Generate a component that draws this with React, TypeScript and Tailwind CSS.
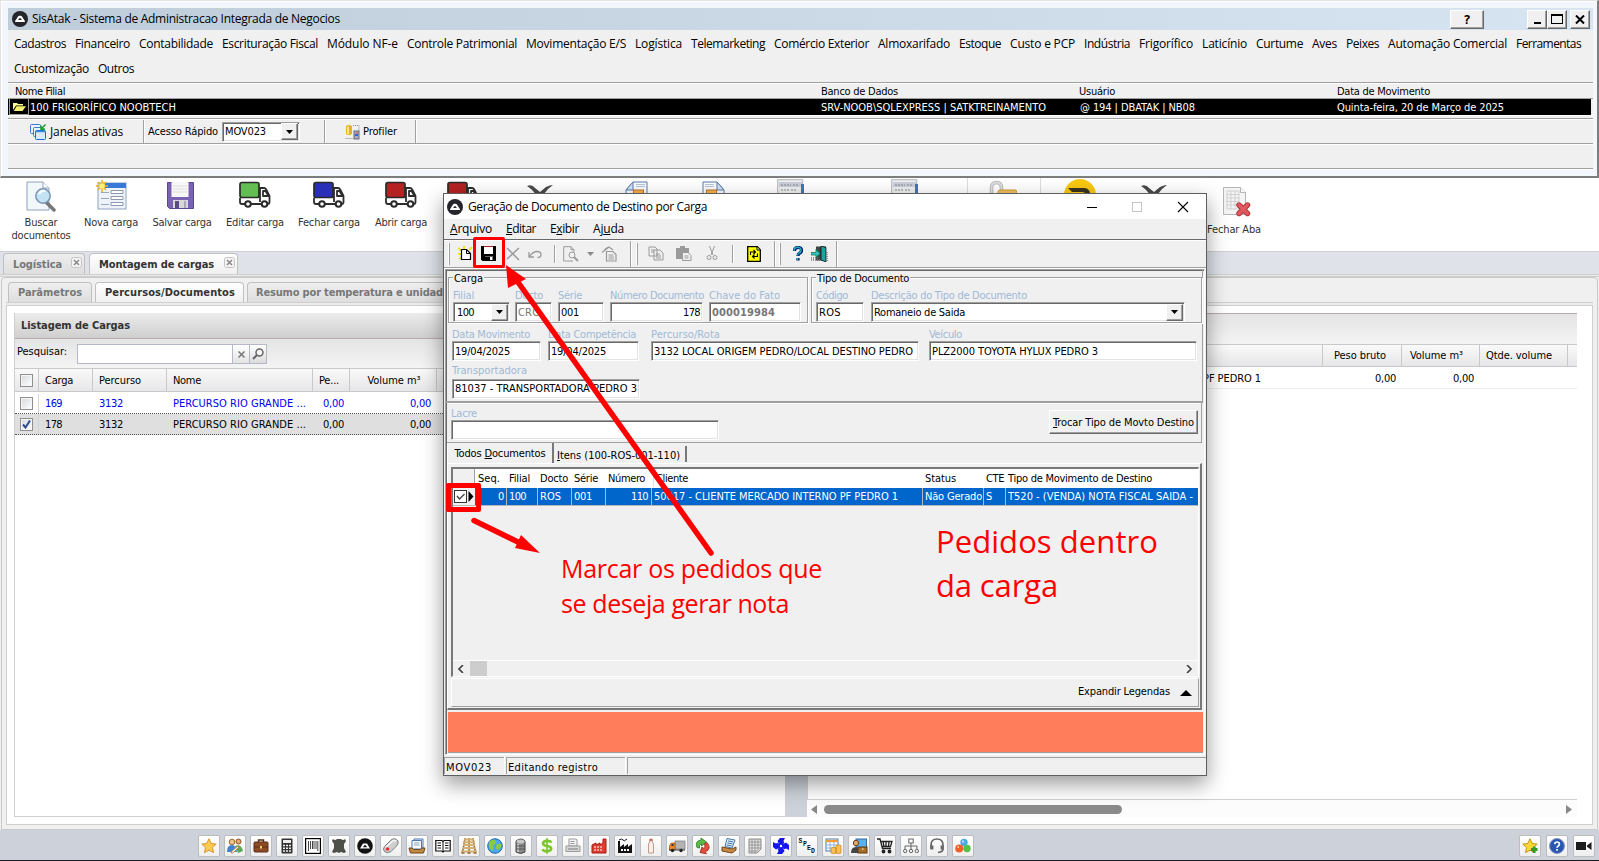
import React, { useLayoutEffect, useRef, useState } from "react";

const TAHOMA = "[--dy:1px] font-['DejaVu_Sans_Condensed','DejaVu_Sans',sans-serif] [font-stretch:condensed] text-[11px]";
const SEGOE = "[--dy:0px] font-['Open_Sans','Noto_Sans',sans-serif] [font-stretch:normal] text-[12px]";
const NOTE = "font-['Open_Sans','Noto_Sans',sans-serif] [font-stretch:88%] text-[#ff0000]";
const RAISED =
  "border border-t-white border-l-white border-r-[#696969] border-b-[#696969] bg-[#f0f0f0] shadow-[inset_-1px_-1px_0_#a0a0a0]";
const SUNKEN =
  "border border-t-[#a0a0a0] border-l-[#a0a0a0] border-r-white border-b-white bg-white shadow-[inset_1px_1px_0_#696969,inset_-1px_-1px_0_#e3e3e3]";

/* Text that spreads its letters to fill the given width. */
function Fit({ w, className = "", children }: { w: number; className?: string; children: React.ReactNode }) {
  const ref = useRef<HTMLSpanElement>(null);
  const [spacing, setSpacing] = useState(0);
  useLayoutEffect(() => {
    const el = ref.current;
    if (!el) return;
    const n = (el.textContent || "").length || 1;
    setSpacing((w - el.getBoundingClientRect().width) / n);
  }, [w]);
  return (
    <span ref={ref} className={`inline-block shrink-0 translate-y-(--dy) whitespace-pre ${className}`} style={{ letterSpacing: spacing }}>
      {children}
    </span>
  );
}

const Logo = ({ className = "size-4" }: { className?: string }) => (
  <svg viewBox="0 0 16 16" className={className}>
    <circle cx="8" cy="8" r="8" fill="#25252b" />
    <path d="M3 10.200 6 5.600Q6.500 4.800 7.300 4.800h1.400q.8 0 1.300.8l3 4.600q.3.8-.6.8H3.600Q2.700 11 3 10.200Z" fill="#fff" />
    <path d="M6.200 9 7.300 7.300h1.400L9.800 9Z" fill="#25252b" />
  </svg>
);

const Down = () => (
  <svg viewBox="0 0 7 4" className="h-[4px] w-[7px]">
    <path d="M0 0h7L3.500 4Z" fill="#000" />
  </svg>
);

/* ---------- application window ---------- */

const MENU: [string, number][] = [
  ["Cadastros", 52], ["Financeiro", 55], ["Contabilidade", 74], ["Escrituração Fiscal", 96], ["Módulo NF-e", 71],
  ["Controle Patrimonial", 110], ["Movimentação E/S", 100], ["Logística", 47], ["Telemarketing", 74],
  ["Comércio Exterior", 95], ["Almoxarifado", 72], ["Estoque", 42], ["Custo e PCP", 65], ["Indústria", 46],
  ["Frigorífico", 54], ["Laticínio", 45], ["Curtume", 47], ["Aves", 25], ["Peixes", 33],
  ["Automação Comercial", 119], ["Ferramentas", 65],
];

function AppWindow() {
  return (
    <header className="h-[178px] shrink-0 border-t border-l border-[#e3e3e3] border-r-2 border-b-2 border-r-[#7d7d7d] border-b-[#7d7d7d] bg-[#f3f6fc] pt-[7px] pr-[4px] pl-[7px] shadow-[inset_1px_1px_0_#fff]">
      <div className="flex h-[162px] flex-col bg-[#f0f0f0]">
        <div className="flex h-[22px] items-center bg-gradient-to-r from-[#bfcddb] to-[#d7e4f2] pl-1">
          <Logo />
          <Fit w={308} className={`${SEGOE} ml-[4px] leading-[22px] text-black`}>SisAtak - Sistema de Administracao Integrada de Negocios</Fit>
          <div className={`${RAISED} mr-[43px] ml-auto flex h-[19px] w-[34px] items-center justify-center`}>
            <b className="font-['DejaVu_Sans_Mono'] text-[13px] leading-none">?</b>
          </div>
          <div className={`${RAISED} flex h-[19px] w-[20px] items-end justify-center pb-[4px]`}>
            <i className="h-[2px] w-[7px] bg-black" />
          </div>
          <div className={`${RAISED} flex h-[19px] w-[20px] items-center justify-center`}>
            <i className="h-[10px] w-[12px] border border-t-2 border-black" />
          </div>
          <div className={`${RAISED} mr-[3px] ml-[3px] flex h-[19px] w-[20px] items-center justify-center`}>
            <svg viewBox="0 0 10 9" className="h-[9px] w-[10px]"><path d="m1 .5 8 8M9 .5l-8 8" stroke="#000" strokeWidth="2" /></svg>
          </div>
        </div>
        <nav className={`${SEGOE} h-[52px] pt-[1px] pl-[6px]`}>
          <div className="flex h-[25px] items-center gap-[9px]">
            {MENU.map(([t, w]) => <Fit key={t} w={w}>{t}</Fit>)}
          </div>
          <div className="flex h-[25px] items-center gap-[9px]">
            <Fit w={75}>Customização</Fit>
            <Fit w={36}>Outros</Fit>
          </div>
        </nav>
        <div className={`${TAHOMA} grid h-[17px] shrink-0 grid-cols-[813px_258px_258px_1fr] items-center border-t border-b border-t-[#a0a0a0] border-b-[#a0a0a0] shadow-[inset_0_1px_0_#fff]`}>
          <Fit w={50} className="ml-[7px] justify-self-start">Nome Filial</Fit>
          <Fit w={77} className="justify-self-start">Banco de Dados</Fit>
          <Fit w={36} className="justify-self-start">Usuário</Fit>
          <Fit w={93} className="justify-self-start">Data de Movimento</Fit>
        </div>
        <div className={`${TAHOMA} [--dy:0px] mr-[2px] grid h-[16px] shrink-0 grid-cols-[813px_258px_258px_1fr] items-center bg-black text-white`}>
          <div className="flex h-[16px] items-center">
            <div className="ml-[1px] flex h-[16px] w-[20px] items-center justify-center border border-t-0 border-[#a09a90]">
              <svg viewBox="0 0 13 9" className="h-[9px] w-[13px]">
                <path d="M0 1h4l1 1h5v1.500H3L0 8Z" fill="#ffff90" /><path d="M3.500 4.200H13L9.500 9H.8Z" fill="#f4f070" />
              </svg>
            </div>
            <Fit w={146} className="ml-[1px] leading-[16px]">100 FRIGORÍFICO NOOBTECH</Fit>
          </div>
          <Fit w={225} className="justify-self-start">SRV-NOOB\SQLEXPRESS | SATKTREINAMENTO</Fit>
          <Fit w={115} className="ml-px justify-self-start">@ 194 | DBATAK | NB08</Fit>
          <Fit w={167} className="justify-self-start">Quinta-feira, 20 de Março de 2025</Fit>
        </div>
        <div className="h-[3px] shrink-0 border-t border-white" />
        <div className="flex h-[25px] shrink-0 items-center border-t border-[#a0a0a0] pt-px shadow-[inset_0_1px_0_#fff]">
          <svg viewBox="0 0 17 17" className="ml-[22px] size-[17px]">
            <rect x=".5" y="1.500" width="10" height="9" rx="1" fill="#eaf3fc" stroke="#3b7bd0" />
            <rect x="3.500" y="4.500" width="10" height="9" rx="1" fill="#eaf3fc" stroke="#3b7bd0" />
            <rect x="5.500" y="7.500" width="10" height="9" rx="1" fill="#d9eafb" stroke="#1f6bc8" />
            <path d="M6 8.500h9" stroke="#3b8be0" strokeWidth="1.500" />
            <path d="M15.500 1.500 11 6M11 2.500v3.700h4" stroke="#1f9a30" strokeWidth="1.500" fill="none" />
          </svg>
          <Fit w={73} className={`${SEGOE} ml-[3px]`}><u>J</u>anelas ativas</Fit>
          <i className="ml-[20px] h-[23px] w-[2px] border-r border-l border-l-[#a0a0a0] border-r-white" />
          <Fit w={70} className={`${TAHOMA} ml-[3px]`}>Acesso Rápido</Fit>
          <div className={`${SUNKEN} ml-[4px] flex h-[20px] w-[78px] items-center justify-between pr-px pl-[2px]`}>
            <Fit w={41} className={`${TAHOMA} [--dy:0px]`}>MOV023</Fit>
            <div className={`${RAISED} flex h-[17px] w-[17px] items-center justify-center`}><Down /></div>
          </div>
          <i className="ml-[24px] h-[23px] w-[2px] border-r border-l border-l-[#a0a0a0] border-r-white" />
          <svg viewBox="0 0 15 16" className="ml-[19px] h-[16px] w-[15px]">
            <path d="M1 2q3-2 6 0v8q-3 2-6 0Z" fill="#eab020" /><path d="M2 2.500h2v7.500H2Z" fill="#ffe28a" />
            <path d="M8 1.500h6v6M.5 14.500h8" stroke="#888" strokeDasharray="1 1" fill="none" />
            <rect x="9" y="7" width="5" height="8" fill="#aab" stroke="#667" /><path d="M10 11h3" stroke="#36c" strokeWidth="2" /><path d="M11 9h2" stroke="#d44" />
          </svg>
          <Fit w={34} className={`${TAHOMA} ml-[3px]`}>Profiler</Fit>
          <i className="ml-[18px] h-[23px] w-[2px] border-r border-l border-l-[#a0a0a0] border-r-white" />
        </div>
        <div className="mb-[1px] flex-1 border-t border-b border-[#a0a0a0] shadow-[inset_0_1px_0_#fff,0_1px_0_#fff]" />
      </div>
    </header>
  );
}

/* ---------- web toolbar ---------- */

const Truck = ({ c }: { c: string }) => (
  <svg viewBox="0 0 32 27" className="h-[27px] w-[32px]" strokeLinejoin="round">
    <path d="M1 17v4q0 2 2 2h4M12 23h11M21 7h4q1.500 0 2.200 1.500L30.500 15v6q0 2-2 2M21 6v15M24 10v5h5.500L26.500 10Z" fill="none" stroke="#2e2e2e" strokeWidth="1.800" />
    <rect x="1" y="1.500" width="19" height="15" rx="2" fill={c} stroke="#2a2a2a" strokeWidth="1.700" />
    <circle cx="9" cy="23" r="2.800" fill="#fff" stroke="#2a2a2a" strokeWidth="2" />
    <circle cx="25.500" cy="23" r="2.800" fill="#fff" stroke="#2a2a2a" strokeWidth="2" />
  </svg>
);
const Cross = () => (
  <svg viewBox="0 0 28 28" className="mt-[3px] size-[28px]">
    <path d="M1 2q5-2 8 2l5 4 6-5q4-2 7-2-6 4-9 9 3 6 9 14-5-1-13-11Q8 22 2 25q3-7 9-13Q5 4 1 2Z" fill="#4a4a4a" />
  </svg>
);
const DocPeek = ({ flip }: { flip?: boolean }) => (
  <svg viewBox="0 0 23 28" className={flip ? "h-[28px] w-[23px] -scale-x-100" : "h-[28px] w-[23px]"}>
    <path d="M8 1h14v26H1V9Z" fill="#f8fbff" stroke="#5a7ca8" /><path d="M8 1v8H1Z" fill="#d4e4f6" stroke="#5a7ca8" />
    <path d="M11 3.500h9M11 5.500h9" stroke="#b8c4d4" /><rect x="8.500" y="9" width="10" height="6" fill="#f8b050" stroke="#c07020" />
  </svg>
);
const FormPeek = () => (
  <svg viewBox="0 0 28 28" className="-mt-[2px] size-[28px]">
    <rect x=".7" y=".7" width="25" height="26" fill="#eeeff1" stroke="#b4b4b4" /><path d="M2 3h23v5H2Z" fill="#c9ced8" />
    <path d="M4 6h10M16 6h5M4 11h8M14 11h6" stroke="#888" strokeDasharray="2 1" /><path d="M25.500 5v22" stroke="#3d78c0" strokeWidth="3" />
  </svg>
);

const Item = ({ box, icon, label, w, top = "pt-[3px]" }: { box: string; icon: React.ReactNode; label?: string[]; w?: number[]; top?: string }) => (
  <div className={`flex h-full shrink-0 flex-col items-center ${box} ${top}`}>
    <div className="flex h-[34px] items-start">{icon}</div>
    {label?.map((l, i) => <Fit key={l} w={w![i]} className="leading-[13px] text-[#333]">{l}</Fit>)}
  </div>
);

function WebToolbar() {
  return (
    <div className={`${TAHOMA} flex h-[73px] shrink-0 overflow-hidden bg-white pl-[6px]`}>
      <Item box="w-[70px]" label={["Buscar", "documentos"]} w={[33, 59]} icon={
        <svg viewBox="0 0 30 31" className="h-[31px] w-[30px]">
          <path d="M1 1h16l6 6v22H1Z" fill="#f2f7fc" stroke="#8fa3bd" /><path d="M17 1v6h6" fill="#fff" stroke="#8fa3bd" />
          <path d="M20 21l8 8" stroke="#777" strokeWidth="3.500" strokeLinecap="round" /><circle cx="17" cy="15" r="7.200" fill="#c4e2f6" stroke="#7a93ad" strokeWidth="1.500" /><path d="M13 13q2-4 6-3" stroke="#fff" strokeWidth="2" fill="none" />
        </svg>} />
      <Item box="w-[70px]" label={["Nova carga"]} w={[54]} icon={
        <svg viewBox="0 0 31 30" className="-mt-px h-[30px] w-[31px]">
          <rect x="2" y="3" width="28" height="26" fill="#eef3fa" stroke="#8ea4c0" /><path d="M9 3h21v5H9Z" fill="#3878d8" />
          <path d="M5 12.500h8M5 18.500h8M5 24.500h8" stroke="#9aa8bc" /><path d="M15 10.500h12v3H15ZM15 16.500h12v3H15ZM15 22.500h12v3H15Z" fill="#fff" stroke="#8d98ac" />
          <path d="M6 0v12M0 6h12M2 2l8 8M10 2l-8 8" stroke="#e8b21c" strokeWidth="1.500" /><circle cx="6" cy="6" r="2.500" fill="#fff27a" />
        </svg>} />
      <Item box="w-[72px]" label={["Salvar carga"]} w={[59]} icon={
        <svg viewBox="0 0 27 28" className="ml-[-4px] h-[28px] w-[27px]">
          <path d="M.5 1.500h26v26H2.500l-2-2Z" fill="#7a62b4" stroke="#5b4790" /><rect x="4.500" y="1" width="17" height="15" fill="#f8f8f8" /><path d="M6 5h14M6 8h14M6 11h14" stroke="#ddd" />
          <rect x="6" y="19" width="15" height="8" fill="#d8d8dc" /><rect x="8" y="20" width="4" height="7" fill="#5a4a88" /><path d="M18 20v7" stroke="#aaa" strokeWidth="2" />
        </svg>} />
      <Item box="w-[74px]" label={["Editar carga"]} w={[58]} icon={<Truck c="#62be52" />} />
      <Item box="w-[74px]" label={["Fechar carga"]} w={[62]} icon={<Truck c="#2a2fb8" />} />
      <Item box="w-[70px]" label={["Abrir carga"]} w={[52]} icon={<Truck c="#b42222" />} />
      <Item box="w-[54px]" icon={<Truck c="#b42222" />} />
      <Item box="w-[100px]" icon={<Cross />} />
      <Item box="w-[92px]" icon={<DocPeek />} />
      <Item box="w-[62px]" icon={<DocPeek flip />} />
      <Item box="w-[94px]" icon={<FormPeek />} />
      <Item box="w-[130px] pl-[4px] border-r border-[#ddd]" icon={<FormPeek />} />
      <Item box="w-[73px] border-r border-[#ddd]" icon={
        <svg viewBox="0 0 28 28" className="-mt-px ml-[-3px] size-[28px]"><path d="M2.500 13V8q0-5.500 5-5.500t5 5.500v3" fill="none" stroke="#b8b8b8" strokeWidth="3.600" /><path d="M2.500 13V8q0-5.500 5-5.500t5 5.500v3" fill="none" stroke="#dedede" strokeWidth="1.800" /><rect x="9" y="10" width="19" height="15" rx="2" fill="#f0c060" stroke="#d09a30" /></svg>} />
      <Item box="w-[77px]" icon={
        <svg viewBox="0 0 32 32" className="-mt-[2px] size-[32px]"><circle cx="16" cy="16" r="16" fill="#f8c810" /><path d="M4 9h17q5 1 5 6l-4 2q0-4-4-4H8Z" fill="#3a3420" /></svg>} />
      <Item box="w-[72px]" icon={<Cross />} />
      <Item box="w-[88px]" top="pt-[10px]" label={["Fechar Aba"]} w={[54]} icon={
        <svg viewBox="0 0 29 30" className="-mt-px ml-[4px] h-[30px] w-[29px]">
          <path d="M1.500.5h17l5 5v22h-22Z" fill="#f4f4f4" stroke="#b5b5b5" /><path d="M18.500.5v5h5" fill="#fff" stroke="#b5b5b5" />
          <path d="M5 4h12v18H5ZM5 7.500h12M5 11h12M5 14.500h12M5 18h12M9 4v18M13 4v18" fill="none" stroke="#cfcfcf" />
          <path d="m17 18 8.500 8.500M25.500 18 17 26.500" stroke="#b03038" strokeWidth="5.400" strokeLinecap="round" /><path d="m17 18 8.500 8.500M25.500 18 17 26.500" stroke="#e0595c" strokeWidth="3.600" strokeLinecap="round" />
        </svg>} />
    </div>
  );
}

/* ---------- web workspace ---------- */

const TabX = () => (
  <svg viewBox="0 0 11 11" className="mb-[4px] size-[11px]">
    <rect x=".5" y=".5" width="10" height="10" rx="2" fill="#f4f4f4" stroke="#c4c4c4" />
    <path d="m3 3 5 5M8 3 3 8" stroke="#888" strokeWidth="1.500" />
  </svg>
);
const Check = ({ on }: { on?: boolean }) => (
  <span className="flex size-[13px] items-center justify-center border border-[#8f8f8f] bg-gradient-to-br from-[#d6d9dc] to-white shadow-[inset_0_0_0_1px_#f6f6f6]">
    {on && <svg viewBox="0 0 9 9" className="size-[9px]"><path d="M1 4.500 3.500 7.500 8 .5" fill="none" stroke="#2d4c96" strokeWidth="2" /></svg>}
  </span>
);

function LoadList() {
  const cols = "grid grid-cols-[24px_54px_74px_146px_37px_87px_1fr] items-center";
  const cell = "flex h-full items-center";
  return (
    <section className="flex w-[771px] flex-col border-b border-l border-[#cfcfcf]">
      <div className="flex h-[25px] shrink-0 items-center bg-gradient-to-b from-[#ececec] to-[#cfcfcf] pl-[6px]">
        <Fit w={109} className="font-bold text-[#333]">Listagem de Cargas</Fit>
      </div>
      <div className="flex h-[30px] shrink-0 items-start border-t border-[#bda9ad] bg-gradient-to-b from-[#e4e4e4] to-[#f4f4f4] pl-[2px]">
        <Fit w={50} className="mt-[4px]">Pesquisar:</Fit>
        <div className="mt-[5px] ml-[10px] flex h-[20px] w-[190px] border border-[#b5b8c8] bg-white">
          <div className="ml-auto flex w-[17px] items-center justify-center border-l border-[#b5b8c8] bg-gradient-to-b from-white to-[#e4e4e4]">
            <svg viewBox="0 0 7 7" className="size-[7px]"><path d="m.5.5 6 6m0-6-6 6" stroke="#777" strokeWidth="1.500" /></svg>
          </div>
          <div className="flex w-[17px] items-center justify-center border-l border-[#b5b8c8] bg-gradient-to-b from-white to-[#dcdcdc]">
            <svg viewBox="0 0 12 12" className="size-[12px]"><circle cx="7.500" cy="4.500" r="3.500" fill="#f4f4f4" stroke="#666" strokeWidth="1.500" /><path d="M5 7 1 11" stroke="#666" strokeWidth="2" /></svg>
          </div>
        </div>
      </div>
      <div className={`${cols} h-[24px] shrink-0 border-t border-b border-[#c9c9c9] bg-gradient-to-b from-[#fafafa] to-[#e6e6e8]`}>
        <div className={`${cell} border-r border-[#c9c9c9] pl-[5px]`}><Check /></div>
        <div className={`${cell} border-r border-[#c9c9c9] pl-[6px]`}><Fit w={28}>Carga</Fit></div>
        <div className={`${cell} border-r border-[#c9c9c9] pl-[6px]`}><Fit w={42}>Percurso</Fit></div>
        <div className={`${cell} border-r border-[#c9c9c9] pl-[6px]`}><Fit w={28}>Nome</Fit></div>
        <div className={`${cell} border-r border-[#c9c9c9] pl-[6px]`}><Fit w={20}>Pe...</Fit></div>
        <div className={`${cell} justify-center border-r border-[#c9c9c9] pl-[2px]`}><Fit w={53}>Volume m³</Fit></div>
      </div>
      {[["169", "text-[#0000f0] h-[22px] pt-[2px]"], ["178", "h-[21px] bg-[#dfdfdf]"]].map(([id, c]) => (
        <div key={id} className={`${cols} ${c} shrink-0 border-b border-dotted border-[#555]`}>
          <div className={`${cell} border-r border-[#d4d4d4] pl-[5px]`}><Check on={id === "178"} /></div>
          <Fit w={17} className="ml-[6px] justify-self-start">{id}</Fit>
          <Fit w={24} className="ml-[6px] justify-self-start">3132</Fit>
          <Fit w={133} className="ml-[6px] justify-self-start">PERCURSO RIO GRANDE ...</Fit>
          <Fit w={21} className="mr-[6px] justify-self-end">0,00</Fit>
          <Fit w={21} className="mr-[6px] justify-self-end">0,00</Fit>
        </div>
      ))}
    </section>
  );
}

function DetailList() {
  const cols = "grid grid-cols-[516px_79px_78px_88px_1fr] items-center";
  const h = "flex h-full items-center border-r border-[#c9c9c9]";
  return (
    <section className="flex w-[770px] flex-col">
      <div className="h-[31px] shrink-0 border-t border-[#bda9ad] bg-gradient-to-b from-[#e4e4e4] to-[#f4f4f4]" />
      <div className={`${cols} h-[23px] shrink-0 border-t border-b border-[#c9c9c9] bg-gradient-to-b from-[#fafafa] to-[#e6e6e8]`}>
        <div className={h} />
        <div className={`${h} pl-[11px]`}><Fit w={52}>Peso bruto</Fit></div>
        <div className={`${h} pl-[8px]`}><Fit w={53}>Volume m³</Fit></div>
        <div className={`${h} pl-[6px]`}><Fit w={66}>Qtde. volume</Fit></div>
      </div>
      <div className={`${cols} h-[22px] shrink-0 border-b border-[#ededed] pt-[2px]`}>
        <Fit w={58} className="mr-[62px] justify-self-end">PF PEDRO 1</Fit>
        <Fit w={21} className="mr-[6px] justify-self-end">0,00</Fit>
        <Fit w={21} className="mr-[6px] justify-self-end">0,00</Fit>
      </div>
      <div className="flex-1 border-l border-[#d0d0d0]" />
      <div className="flex h-[18px] shrink-0 items-center border-t border-[#d0d0d0] bg-[#fcfcfc] px-[4px] pt-[2px]">
        <svg viewBox="0 0 6 9" className="h-[9px] w-[6px]"><path d="M6 0v9L0 4.500Z" fill="#888" /></svg>
        <div className="ml-[7px] h-[9px] w-[298px] rounded-full bg-[#8a8a8a]" />
        <svg viewBox="0 0 6 9" className="mr-px ml-auto h-[9px] w-[6px]"><path d="M0 0v9l6-4.500Z" fill="#888" /></svg>
      </div>
    </section>
  );
}

function Workspace() {
  const tab = "flex items-center rounded-t-[4px] border border-b-0 font-bold";
  const off = "border-[#c0c0c0] bg-gradient-to-b from-[#eeeeee] to-[#dedede] text-[#777]";
  const on = "border-[#c0c0c0] bg-gradient-to-b from-white to-[#f0f0f0] text-[#333]";
  return (
    <main className={`${TAHOMA} flex h-[579px] shrink-0 flex-col bg-[#f0f0f0]`}>
      <div className="flex h-[23px] shrink-0 items-end gap-[4px] border-t border-[#ccd0d6] bg-[#dfe3e9] pl-[3px]">
        <div className={`${tab} ${off} h-[21px] w-[82px] justify-between pr-[2px] pl-[9px]`}><Fit w={49}>Logística</Fit><TabX /></div>
        <div className={`${tab} ${on} h-[21px] w-[149px] justify-between pr-[2px] pl-[9px]`}><Fit w={115}>Montagem de cargas</Fit><TabX /></div>
      </div>
      <div className="h-[3px] shrink-0 border-t border-b border-[#cfcfcf] bg-[#ebebeb]" />
      <div className="mr-[1px] ml-[1px] flex h-[553px] shrink-0 flex-col rounded-t-[4px] border border-[#c8c8c8] bg-[#f0f0f0] px-[4px]">
        <div className="flex h-[24px] shrink-0 items-end gap-[3px] pl-[2px]">
          <div className={`${tab} ${off} h-[20px] w-[84px] pl-[9px]`}><Fit w={64}>Parâmetros</Fit></div>
          <div className={`${tab} ${on} h-[20px] w-[149px] pl-[9px]`}><Fit w={130}>Percursos/Documentos</Fit></div>
          <div className={`${tab} ${off} h-[20px] w-[240px] pl-[8px]`}><Fit w={187}>Resumo por temperatura e unidad</Fit></div>
        </div>
        <div className="h-[4px] shrink-0 border-t border-b border-[#cfcfcf] bg-[#ececec]" />
        <div className="flex h-[519px] border border-t-0 border-[#cfcfcf] bg-white pt-[7px] pb-[7px] pl-[7px]">
          <LoadList />
          <div className="w-[22px] bg-[#cdd2da]" />
          <DetailList />
        </div>
      </div>
    </main>
  );
}

/* ---------- bottom dock ---------- */

const DOCK: React.ReactNode[] = [
  <path d="m8 .8 2.200 4.700 5 .6-3.700 3.500 1 5L8 12.200l-4.500 2.400 1-5L.8 6.100l5-.6Z" fill="#fccb52" stroke="#d8952a" />,
  <g><circle cx="5" cy="4" r="2.800" fill="#f0c090" stroke="#a06828" /><circle cx="11.500" cy="3.500" r="2.500" fill="#e8a860" stroke="#8a5018" /><path d="M0 14q0-7 5-7 4 0 5 7Z" fill="#3f84cc" /><path d="M8 8q6-3 8 5l-5 2Z" fill="#5aa85a" /><path d="m5 13 6-5 1 1-6 6H4Z" fill="#f4f4f4" stroke="#c07020" strokeWidth=".7" /></g>,
  <g><path d="M5.500 4V2h5v2" fill="none" stroke="#5a2d14" strokeWidth="1.400" /><rect x="1" y="4" width="14" height="10" rx="1" fill="#8e4a24" stroke="#5a2d14" /><path d="M1 9h14" stroke="#5a2d14" /><rect x="7" y="8" width="2" height="2.500" fill="#f0d060" /></g>,
  <g><rect x="2.500" y=".5" width="11" height="15" rx="1" fill="#333" /><rect x="4" y="2" width="8" height="3" fill="#eee" /><path d="M4 7.500h8M4 10.300h8M4 13h8" stroke="#eee" strokeWidth="1.600" strokeDasharray="2 1" /></g>,
  <g><rect x=".6" y=".6" width="14.800" height="14.800" fill="#fff" stroke="#000" strokeWidth="1.200" /><path d="M3.500 3v10M5.500 3v8M7.500 3v8M9 3v8M11 3v8M12.800 3v10" stroke="#333" strokeWidth=".9" /></g>,
  <path d="M2 1q2 2 4 0h4q2 2 4 0l1 2-2 3v4l2 4-2 1-3-1-2 1-2-1-3 1-2-1 2-4V6L1 3Z" fill="#4c5048" />,
  <g><circle cx="8" cy="8" r="7.800" fill="#111" /><path d="M3 10.500 6 5.500h4l3 5Z" fill="#fff" /><path d="m6 9.300 1.200-2h1.600l1.200 2Z" fill="#111" /></g>,
  <g><path d="M1.500 8.500 8 2q4-3 7 1 1 3-2 5.500L8 13.500q-4 2.500-6.500 0-2-2.500 0-5Z" fill="#cfcfcf" stroke="#7c7c7c" /><path d="M3 9.500 9 3.500q2-1.500 4-.5" fill="none" stroke="#f6f6f6" strokeWidth="1.500" /><circle cx="4.500" cy="11" r="1.800" fill="#e83030" /></g>,
  <g><path d="M5 1h9v9H5Z" fill="#eaf2fc" stroke="#4a7ab8" /><path d="M3 2.500h9.500V11H3Z" fill="#f5f9ff" stroke="#4a7ab8" /><path d="M5 5h5.500M5 7h5.500" stroke="#8ab" /><path d="M0 10h3l1.500 1.500h7L13 10h3l-1.500 5H1.500Z" fill="#c08a40" stroke="#70461a" /></g>,
  <g><path d="M.8 2.500h6l1.200 1 1.200-1h6v10.500h-6L8 14l-1.200-1h-6Z" fill="#fff" stroke="#111" strokeWidth="1.200" /><path d="M8 3.500V14M2.500 5h3.500M2.500 7.500h3.500M2.500 10h3.500M10 5h3.500M10 7.500h3.500M10 10h3.500" stroke="#111" /></g>,
  <g><path d="M4 0 1.500 15M8 0v15M12 0l2.500 15" stroke="#8f6c34" strokeWidth="1.500" /><path d="M3 1.500h10M2.500 4.200h11M2 7h12M1.500 10h13M0 13.500h16" stroke="#d4b070" strokeWidth="1.900" /><path d="M.5 15h3M6.500 15h3M12.500 15h3" stroke="#8f6c34" strokeWidth="1.500" /></g>,
  <g><circle cx="8" cy="8" r="7.300" fill="#4aa8e8" stroke="#1f68a8" /><path d="M2 4q4-4 7-1 0 3-3 4 1 4-1 6-4-3-3-9Z" fill="#8ccc3c" /><path d="M10 6q4-1 4.500 1-.5 4-4.500 5-2-3 0-6Z" fill="#8ccc3c" /></g>,
  <g><path d="M3 3q5-4 9 0v11q-4 3-9 0Z" fill="#888" stroke="#444" /><ellipse cx="7.500" cy="3.500" rx="4" ry="2" fill="#c8c8c8" /><path d="M5 6v8" stroke="#ddd" strokeWidth="1.500" /><path d="M3 8h9M3 11h9" stroke="#555" /></g>,
  <g fill="none" stroke="#7bc62c"><path d="M12.300 4.600q-1-1.700-4.300-1.700-4 0-4 2.400T8 8t4.200 2.700Q12 13.200 8 13.200q-3.700 0-4.500-2" strokeWidth="2.600" /><path d="M8 .3v15.400" strokeWidth="1.700" /></g>,
  <g fill="#f4f4f4" stroke="#999"><path d="M4 1h7l1 1v6H4Z" /><path d="M5.500 3.500h4M5.500 5.500h4" /><path d="M1 8h14v5.500H1Z" fill="#d8d8d8" /><path d="M3 11h10" stroke="#777" /></g>,
  <g><path d="M1 15V7l4-2v2l4-2v2l3-2V1h3v14Z" fill="#e03c30" stroke="#a81c14" /><path d="M3 9h9M3 12h9" stroke="#fff" strokeDasharray="2 1" /></g>,
  <g><path d="M1 15V3h2v6l4-3v3l4-3v3l4-3v9Z" fill="#111" /><path d="M2 2q3-2 4 0t4-1" fill="none" stroke="#111" /><path d="M4 12h9" stroke="#fff" strokeWidth="2" strokeDasharray="2 1" /></g>,
  <g><path d="M6.800 1h2.400v3l1.300 2v9h-5V6l1.300-2Z" fill="#faeee6" stroke="#b08878" strokeWidth=".8" /><path d="M6.500 1h3v2h-3Z" fill="#c87858" /></g>,
  <g><rect x="6" y="3" width="10" height="8" fill="#b4b4b4" stroke="#777" strokeWidth=".7" /><path d="M.5 12V8l1.500-3H6v7Z" fill="#f08a20" stroke="#a05010" strokeWidth=".7" /><path d="M2 8h2.500V6H3Z" fill="#333" /><path d="M0 12h16" stroke="#333" /><circle cx="3.500" cy="12.500" r="1.700" fill="#222" /><circle cx="12" cy="12.500" r="1.700" fill="#222" /></g>,
  <g strokeWidth=".8"><path d="M2 9.500Q-.5 3 6 2V0l5.500 4L6.500 8V5.800Q3.500 6.500 4.500 10Z" fill="#5cba48" stroke="#2c7a24" /><path d="M12 4.500q5 6-1.500 9.500l.8 1.800L5 14.500l2-5.500 1 1.800q3-2 1.500-5Z" fill="#e05040" stroke="#a02418" /></g>,
  <g><path d="m6 .5 8 1.500-3 8-7-1.500Z" fill="#dcecfa" stroke="#4878a8" /><path d="m7 3 5 .9M6.500 5l5 .9M5.700 7l5 .9" stroke="#4878a8" /><path d="m1 9 10 2 4-2v3l-4 3-10-2Z" fill="#c88a40" stroke="#70461a" /></g>,
  <g fill="none" stroke="#888"><path d="M2 1h12v10l-4 4H2Z" fill="#e4e4e4" /><path d="M2 4h12M2 7h12M2 10h12M2 13h9M5 1v14M8 1v14M11 1v11" strokeWidth=".8" /></g>,
  <g fill="#1414ee"><path d="M6.500 6.500 4.500 3 7 0h5l-1.500 3 1 2.500Z" /><path d="M9.500 6.500 13 4.500 16 7v5l-3-1.500-2.500 1Z" /><path d="m9.500 9.500 2 3.500L9 16H4l1.500-3-1-2.500Z" /><path d="M6.500 9.500 3 11.500 0 9V4l3 1.500 2.500-1Z" /><path d="M6 6h4v4H6Z" /><circle cx="8" cy="8" r="1.200" fill="#fff" /></g>,
  <g className="font-['Liberation_Mono'] text-[6.500px] font-bold" fill="#111"><text x="-.5" y="4.500">S</text><text x="4" y="8">P</text><text x="8" y="11.500">E</text><text x="12" y="15">D</text></g>,
  <g><rect x="1" y="1" width="12" height="12" fill="#fff" stroke="#3f80c8" /><path d="M1 3h12" stroke="#f0a030" strokeWidth="2.500" /><path d="M1 7h12M1 10h12M5 4v9M9 4v9" stroke="#8ab4e0" /><path d="M6 10q2.500-1.500 5 0v5q-2.500 1.300-5 0ZM11 7.500q2.500-1.500 5 0V15q-2.500 1.300-5 0Z" fill="#f8c058" stroke="#c88018" strokeWidth=".7" /></g>,
  <g><rect x="5" y="1" width="10.500" height="9" fill="#5ab0f0" stroke="#3a6a9a" /><circle cx="5" cy="5" r="2.700" fill="#e0a868" stroke="#704018" /><path d="M0 15q0-6 5-6t5 6Z" fill="#444" /><rect x="7" y="9" width="9" height="6" fill="#a8702c" stroke="#5a3810" /><path d="M11 11h1.500" stroke="#fff" /></g>,
  <g fill="none" stroke="#222" strokeWidth="1.300"><path d="M0 1h3l2.500 9.500H14M3.500 3.500H15l-1.500 5H5M6 3.500l1 5M9 3.500v5M12 3.500l-.5 5" /><circle cx="6.500" cy="13.500" r="1.300" fill="#222" /><circle cx="12.500" cy="13.500" r="1.300" fill="#222" /></g>,
  <g fill="none" stroke="#666"><rect x="5.800" y="1" width="4.400" height="4" /><path d="M8 5v3M2 11V8h12v3M8 8v3" /><circle cx="2.200" cy="13" r="1.700" /><circle cx="8" cy="13" r="1.700" /><circle cx="13.800" cy="13" r="1.700" /></g>,
  <g fill="none" stroke="#666" strokeWidth="1.700"><path d="M2 11V7q0-6 6-6t6 6v4q0 3-5 3.500" /><path d="M3 7.500v4M13 7.500v4" strokeWidth="2.800" /></g>,
  <g><circle cx="9" cy="4.500" r="3.700" fill="#50a8e8" /><circle cx="12" cy="10.500" r="3.700" fill="#58c048" /><circle cx="4.200" cy="10.500" r="4" fill="#f06028" /><circle cx="8" cy="3.500" r="1" fill="#d0ecff" /><circle cx="3.200" cy="9" r="1" fill="#ffc8a8" /></g>,
];

const DOCK_RIGHT: React.ReactNode[] = [
  <g><path d="m8 .8 2.200 4.700 5 .6-3.700 3.500 1 5L8 12.200l-4.500 2.400 1-5L.8 6.100l5-.6Z" fill="#fbd834" stroke="#c09a10" /><path d="M9 11.500h6.500M12.200 8.500V15" stroke="#2aa028" strokeWidth="2.800" /></g>,
  <g><circle cx="8" cy="8" r="7.500" fill="#2a56b0" stroke="#8a9cc0" /><path d="M5.700 6.200q.2-2.200 2.400-2.200t2.300 2q0 1.200-1.200 1.900T8 9.800M8 11v1.700" fill="none" stroke="#fff" strokeWidth="1.700" /></g>,
  <path d="M0 4h10v8H0ZM11 7.500 15.500 4v8L11 8.800Z" fill="#1c1c1c" />,
];

const DockButton = ({ children }: { children: React.ReactNode }) => (
  <div className="flex size-[22px] items-center justify-center rounded-[2px] border border-[#bdbdbd] bg-gradient-to-b from-white to-[#efefef]">
    <svg viewBox="0 0 16 16" className="size-[16px] overflow-visible">{children}</svg>
  </div>
);

function Dock() {
  return (
    <footer className="flex h-[31px] shrink-0 items-center gap-[4px] border-b border-[#1c1c22] bg-[#cdd2da] pt-[2px] pr-[4px] pl-[198px]">
      {DOCK.map((d, i) => <DockButton key={i}>{d}</DockButton>)}
      <div className="ml-auto flex gap-[5px]">{DOCK_RIGHT.map((d, i) => <DockButton key={i}>{d}</DockButton>)}</div>
    </footer>
  );
}

/* ---------- dialog ---------- */

function Field({ label, lw, box, gap = "", children }: { label: string; lw: number; box: string; gap?: string; children?: React.ReactNode }) {
  return (
    <div className={`flex shrink-0 flex-col ${gap}`}>
      <div className="h-[14px] leading-[14px] [--dy:0.5px]"><Fit w={lw} className="text-[#9fb8d6]">{label}</Fit></div>
      <div className={`${SUNKEN} flex h-[20px] items-center overflow-hidden px-[2px] ${box}`}>{children}</div>
    </div>
  );
}

const DropBtn = () => <div className={`${RAISED} -mr-px ml-auto flex h-[17px] w-[17px] shrink-0 items-center justify-center`}><Down /></div>;
const Sep = ({ className = "" }: { className?: string }) => <i className={`w-[2px] shrink-0 border-r border-l border-l-[#a0a0a0] border-r-white ${className}`} />;

function DialogToolbar() {
  const g = { fill: "none", stroke: "#9a9a9a" };
  return (
    <div className="flex h-[28px] shrink-0 items-center border-b border-[#a0a0a0] pl-[4px] shadow-[inset_0_1px_0_#fff,0_1px_0_#fff]">
      <Sep className="h-[22px] -scale-x-100" />
      <svg viewBox="0 0 16 16" className="ml-[8px] size-[16px]">
        <path d="M0 2l4 3M1 13l3-2M6 0v4M0 8h4M14 1l-3 3" stroke="#f0e020" strokeWidth="2" />
        <path d="M3.500 3.500h5l4 4v6h-9Z" fill="#fff" stroke="#000" strokeWidth="1.200" /><path d="M8.500 3.500v4h4" fill="none" stroke="#000" />
      </svg>
      <svg viewBox="0 0 15 15" className="ml-[7px] size-[15px]"><path d="M0 0h15v15H1.500L0 13.500Z" fill="#000" /><path d="M3 0h9v8H3Z" fill="#fff" /><path d="M3 0h9v1H3Z" fill="#b02020" /><path d="M9 11h2.500v3H9Z" fill="#fff" /><path d="M4 10.500h8" stroke="#666" /></svg>
      <svg viewBox="0 0 14 14" className="ml-[10px] size-[14px]" {...g}><path d="m1 1 12 12M13 1 1 12" strokeWidth="1.500" /></svg>
      <svg viewBox="0 0 14 12" className="ml-[8px] h-[12px] w-[14px]" {...g}><path d="M1 4v5h5M1.500 8.500Q5 3.500 9 3.500q4 0 4 3t-3.500 3" strokeWidth="1.300" /></svg>
      <Sep className="ml-[12px] h-[18px]" />
      <svg viewBox="0 0 16 16" className="ml-[7px] size-[16px]" {...g}><path d="M10 15H.7V.7H8l3 3V6M8 .7v3h3" /><circle cx="9" cy="9" r="3" /><path d="m11 11 4 4" strokeWidth="2" /></svg>
      <svg viewBox="0 0 7 4" className="ml-[8px] h-[4px] w-[7px]"><path d="M0 0h7L3.500 4Z" fill="#8a8a8a" /></svg>
      <svg viewBox="0 0 16 16" className="ml-[7px] size-[16px]" {...g}><path d="M1 6.500 8 1l4 3M3 5q1-3 5-4M5.500 5.500H12l3 3V15H5.500ZM7.500 9h5M7.500 11h5.500M7.500 13h5.500" strokeWidth="1.200" /></svg>
      <Sep className="ml-[13px] h-[26px]" /><Sep className="ml-[4px] h-[22px] -scale-x-100" />
      <svg viewBox="0 0 16 15" className="ml-[10px] h-[15px] w-[16px]" {...g}><path d="M1 1h6l2 2v7H1ZM6 4h6l3 3v7H6ZM8 8h4M8 10h5M8 12h5M3 4h3M3 6h3" /></svg>
      <svg viewBox="0 0 16 15" className="ml-[12px] h-[15px] w-[16px]"><path d="M0 2h4V0h5v2h4v11H0Z" fill="#9a9a9a" /><path d="M6.500 6.500H12l3 3v5H6.500Z" fill="#f0f0f0" stroke="#9a9a9a" /><path d="M8.500 10h4M8.500 12h4" stroke="#9a9a9a" /></svg>
      <svg viewBox="0 0 12 15" className="ml-[14px] h-[15px] w-[12px]" {...g}><path d="M3.500 0 7 9M8.500 0 5 9" /><circle cx="3" cy="11.500" r="2" /><circle cx="9" cy="11.500" r="2" /></svg>
      <Sep className="ml-[14px] h-[18px]" />
      <svg viewBox="0 0 14 16" className="ml-[13px] h-[16px] w-[14px]"><path d="M.7.7h9.600l3 3v11.600H.7Z" fill="#ff0" stroke="#000" strokeWidth="1.300" /><path d="M10 1v3h3" fill="#fff" stroke="#000" /><path d="M3.500 9V6H8M6.500 4l2 2-2 2M10.500 7.500v3H6M7.500 8.500l-2 2 2 2" fill="none" stroke="#000" strokeWidth="1.100" /></svg>
      <Sep className="ml-[13px] h-[26px]" /><Sep className="ml-[3px] h-[22px] -scale-x-100" />
      <svg viewBox="0 0 12 15" className="ml-[11px] h-[15px] w-[12px]"><path d="M2.500 5q0-3.500 3.500-3.500T9.500 4.500q0 2-2 2.800-1.500.7-1.500 2.700M6 12v2.500" fill="none" stroke="#001a70" strokeWidth="3.200" /><path d="M2 4.800q0-3.500 3.500-3.500T9 4.500q0 2-2 2.600-1.500.7-1.500 2.400M5.500 12v2" fill="none" stroke="#20a8b8" strokeWidth="1.500" /></svg>
      <svg viewBox="0 0 17 16" className="ml-[7px] h-[16px] w-[17px]"><path d="M5 .5h10v14H5Z" fill="#444" /><path d="M10 0l5 1.500V16l-5-2Z" fill="#20a0a0" stroke="#000" strokeWidth=".7" /><path d="M0 6.500h5V3.500l4 4-4 4V9H0Z" fill="#38c8c8" stroke="#063" strokeWidth=".7" /><path d="M0 12h8M0 14h10M16 6v9" stroke="#777" strokeWidth="1.500" strokeDasharray="1 1" /></svg>
      <Sep className="ml-[8px] h-[26px]" />
    </div>
  );
}

function Group({ title, tw, box, children }: { title: string; tw: number; box: string; children: React.ReactNode }) {
  return (
    <div className={`relative flex h-[46px] shrink-0 border border-[#a0a0a0] pt-[10px] pl-[4px] shadow-[1px_1px_0_#fff,inset_1px_1px_0_#fff] ${box}`}>
      <span className="absolute -top-[7px] left-[4px] bg-[#f0f0f0] px-px leading-[14px]"><Fit w={tw}>{title}</Fit></span>
      {children}
    </div>
  );
}

const COLS = "grid grid-cols-[22px_32px_31px_34px_34px_46px_271px_61px_22px_1fr]";

function Grid() {
  const c = "flex h-full items-center overflow-hidden border-r border-[#b8b8b8] pl-[2px]";
  return (
    <div className="mt-[3px] ml-[3px] flex h-[210px] w-[748px] flex-col border-t-2 border-r border-b border-l-2 border-t-[#787878] border-r-white border-b-white border-l-[#787878]">
      <div className={`${COLS} h-[19px] shrink-0 items-center bg-white`}>
        <div className="h-full border-r border-[#a0a0a0] bg-[#f0f0f0]" />
        <div className="pl-[3px]"><Fit w={22}>Seq.</Fit></div>
        <div className="pl-[2px]"><Fit w={21}>Filial</Fit></div>
        <div className="pl-[2px]"><Fit w={28}>Docto</Fit></div>
        <div className="pl-[2px]"><Fit w={24}>Série</Fit></div>
        <div className="pl-[2px]"><Fit w={37}>Número</Fit></div>
        <div className="ml-px border-l border-[#ddd] pl-[2px]"><Fit w={32}>Cliente</Fit></div>
        <div className="pl-[2px]"><Fit w={31}>Status</Fit></div>
        <div className="pl-[2px]"><Fit w={18}>CTE</Fit></div>
        <div className="pl-[2px]"><Fit w={144}>Tipo de Movimento de Destino</Fit></div>
      </div>
      <div className={`${COLS} h-[18px] shrink-0 items-center border-b border-[#b8b8b8] bg-[#0066cc] text-white`}>
        <div className="flex h-full items-center bg-[#f0f0f0] pl-px">
          <svg viewBox="0 0 20 13" className="h-[13px] w-[20px]"><rect x=".5" y=".5" width="12" height="12" fill="#fff" stroke="#333" /><path d="m3 6 2.500 3L10.500 4" fill="none" stroke="#444" strokeWidth="1.400" /><path d="M14.500 1v11l5-5.500Z" fill="#000" /></svg>
        </div>
        <div className={`${c} justify-end pr-[2px]`}><Fit w={6}>0</Fit></div>
        <div className={c}><Fit w={17}>100</Fit></div>
        <div className={c}><Fit w={21}>ROS</Fit></div>
        <div className={c}><Fit w={18}>001</Fit></div>
        <div className={`${c} justify-end pr-[3px]`}><Fit w={17}>110</Fit></div>
        <div className={c}><Fit w={244}>50017 - CLIENTE MERCADO INTERNO PF PEDRO 1</Fit></div>
        <div className={c}><Fit w={57}>Não Gerado</Fit></div>
        <div className={c}><Fit w={6}>S</Fit></div>
        <div className="flex h-full items-center overflow-hidden pl-[2px]"><Fit w={185}>T520 - (VENDA) NOTA FISCAL SAIDA -</Fit></div>
      </div>
      <div className="flex-1" />
      <div className="flex h-[16px] shrink-0 items-center border-t border-white px-[5px]">
        <svg viewBox="0 0 6 8" className="h-[8px] w-[6px]"><path d="M5 0 1 4l4 4" fill="none" stroke="#444" strokeWidth="1.700" /></svg>
        <div className="ml-[6px] h-[15px] w-[17px] bg-[#cdcdcd]" />
        <svg viewBox="0 0 6 8" className="mr-px ml-auto h-[8px] w-[6px]"><path d="m1 0 4 4-4 4" fill="none" stroke="#444" strokeWidth="1.700" /></svg>
      </div>
    </div>
  );
}

function Dialog() {
  return (
    <div className={`${TAHOMA} absolute top-[193px] left-[443px] flex h-[583px] w-[764px] flex-col border border-[#5f5f5f] bg-[#f0f0f0] text-black shadow-[0_8px_20px_rgba(0,0,0,0.4)]`}>
      <div className="flex h-[25px] shrink-0 items-center bg-white pl-[3px]">
        <Logo />
        <Fit w={239} className={`${SEGOE} ml-[5px]`}>Geração de Documento de Destino por Carga</Fit>
        <svg viewBox="0 0 102 12" className="mr-[17px] ml-auto h-[12px] w-[102px]">
          <path d="M0 6.500h10" stroke="#000" /><rect x="45.500" y="1.500" width="9" height="9" fill="none" stroke="#c4c4c4" /><path d="m91 1 10 10m0-10L91 11" stroke="#000" strokeWidth="1.100" />
        </svg>
      </div>
      <div className={`${SEGOE} flex h-[21px] shrink-0 items-center gap-[14px] border-b border-[#696969] pl-[6px]`}>
        <Fit w={42}><u>A</u>rquivo</Fit>
        <Fit w={30}><u>E</u>ditar</Fit>
        <Fit w={29}>E<u>x</u>ibir</Fit>
        <Fit w={31}>Aj<u>u</u>da</Fit>
      </div>
      <DialogToolbar />
      <div className="mt-[1px] mr-[1px] ml-[1px] flex h-[486px] shrink-0 flex-col border border-t-[#a0a0a0] border-r-white border-b-white border-l-[#a0a0a0] shadow-[inset_1px_1px_0_#696969]">
        <div className="mr-[1px] h-[133px] shrink-0 border-r border-b-2 border-[#a0a0a0] pt-[7px] pl-[2px]">
          <div className="flex gap-[3px]">
            <Group title="Carga" tw={29} box="w-[360px]">
              <Field label="Filial" lw={21} box="w-[57px]"><Fit w={17} className="ml-px">100</Fit><DropBtn /></Field>
              <Field label="Docto" lw={28} box="w-[37px] text-[#777]" gap="ml-[5px]"><Fit w={22}>CRG</Fit></Field>
              <Field label="Série" lw={24} box="w-[46px]" gap="ml-[6px]"><Fit w={18}>001</Fit></Field>
              <Field label="Número Documento" lw={94} box="w-[93px] justify-end" gap="ml-[6px]"><Fit w={17}>178</Fit></Field>
              <Field label="Chave do Fato" lw={71} box="w-[92px] text-[#777] font-bold" gap="ml-[5px]"><Fit w={63}>000019984</Fit></Field>
            </Group>
            <Group title="Tipo de Documento" tw={92} box="w-[391px]">
              <Field label="Código" lw={32} box="w-[48px]"><Fit w={22}>ROS</Fit></Field>
              <Field label="Descrição do Tipo de Documento" lw={156} box="w-[314px]" gap="ml-[7px]"><Fit w={91}>Romaneio de Saida</Fit><DropBtn /></Field>
            </Group>
          </div>
          <div className="mt-[4px] flex pl-[4px]">
            <Field label="Data Movimento" lw={78} box="w-[89px]"><Fit w={55}>19/04/2025</Fit></Field>
            <Field label="Data Competência" lw={88} box="w-[91px]" gap="ml-[7px]"><Fit w={55}>19/04/2025</Fit></Field>
            <Field label="Percurso/Rota" lw={69} box="w-[268px]" gap="ml-[12px]"><Fit w={259}>3132 LOCAL ORIGEM PEDRO/LOCAL DESTINO PEDRO</Fit></Field>
            <Field label="Veículo" lw={33} box="w-[268px]" gap="ml-[10px]"><Fit w={166}>PLZ2000 TOYOTA HYLUX PEDRO 3</Fit></Field>
          </div>
          <div className="mt-[2px] flex pl-[4px]">
            <Field label="Transportadora" lw={75} box="w-[188px] mt-[2px] [--dy:0px]"><Fit w={182}>81037 - TRANSPORTADORA PEDRO 3</Fit></Field>
          </div>
        </div>
        <div className="mr-[2px] ml-[1px] flex h-[40px] shrink-0 justify-between border-r border-b border-[#a0a0a0] pt-[3px] pr-[3px] pl-[4px] shadow-[inset_0_1px_0_#fff]">
          <Field label="Lacre" lw={26} box="w-[268px]" />
          <div className={`${RAISED} mt-[4px] flex h-[24px] w-[149px] items-center justify-center`}><Fit w={141}><u>T</u>rocar Tipo de Movto Destino</Fit></div>
        </div>
        <div className="ml-[1px] flex h-[20px] shrink-0">
          <div className="flex w-[107px] justify-center border-r-2 border-l border-r-[#787878] border-l-white pt-[2px]"><Fit w={91}>Todos <u>D</u>ocumentos</Fit></div>
          <div className="mt-[3px] flex h-[16px] w-[133px] border-r-2 border-[#787878] pt-[1px] pl-[3px]"><Fit w={123}><u>I</u>tens (100-ROS-001-110)</Fit></div>
        </div>
        <div className="mr-[2px] ml-[1px] h-[247px] shrink-0 border-t border-r-2 border-b-2 border-l border-t-white border-r-[#787878] border-b-[#787878] border-l-white">
          <Grid />
          <div className="mt-[1px] ml-[3px] flex h-[29px] w-[748px] items-center justify-end border border-t-white border-r-[#a0a0a0] border-b-[#a0a0a0] border-l-white pr-[6px]">
            <Fit w={92} className="[--dy:0px]">Expandir Legendas</Fit>
            <svg viewBox="0 0 12 6" className="ml-[10px] h-[6px] w-[12px]"><path d="M0 6 6 0l6 6Z" fill="#000" /></svg>
          </div>
        </div>
        <div className="mt-[2px] mr-[1px] ml-[2px] h-[41px] shrink-0 border-b border-[#a0a0a0] bg-[#ff7d5a]" />
      </div>
      <div className="mt-[2px] flex h-[17px] shrink-0 gap-[2px]">
        <div className="w-[60px] border-t border-l border-[#a0a0a0] pl-px leading-[17px] shadow-[1px_0_0_#fff]"><Fit w={46}>MOV023</Fit></div>
        <div className="w-[119px] border-t border-l border-[#a0a0a0] pl-px leading-[17px] shadow-[1px_0_0_#fff]"><Fit w={90}>Editando registro</Fit></div>
        <div className="flex-1 border-t border-l border-[#a0a0a0]" />
      </div>
    </div>
  );
}

/* ---------- annotations ---------- */

function Annotations() {
  return (
    <>
      <div className="absolute top-[237px] left-[473px] h-[31px] w-[32px] rounded-[2px] border-3 border-[#ff0000]" />
      <div className="absolute top-[483px] left-[446px] h-[29px] w-[35px] rounded-[2px] border-5 border-[#ff0000]" />
      <svg viewBox="0 0 1599 861" className="pointer-events-none absolute top-0 left-0 h-[861px] w-[1599px]">
        <path d="M711 553 515 278M474 520.500 520 543" stroke="#f00" strokeWidth="5.500" strokeLinecap="round" />
        <path d="m506 265 20 14-18 9ZM540 553l-19-18-6 13Z" fill="#f00" />
      </svg>
      <div className={`${NOTE} absolute top-[551px] left-[561px] flex flex-col items-start text-[25px] leading-[35px]`}>
        <Fit w={261}>Marcar os pedidos que</Fit>
        <Fit w={228}>se deseja gerar nota</Fit>
      </div>
      <div className={`${NOTE} absolute top-[519px] left-[936px] flex flex-col items-start text-[31px] leading-[44px]`}>
        <Fit w={222}>Pedidos dentro</Fit>
        <Fit w={122}>da carga</Fit>
      </div>
    </>
  );
}

export default function App() {
  return (
    <div className="relative flex h-[861px] w-[1599px] flex-col overflow-hidden bg-white text-black">
      <AppWindow />
      <WebToolbar />
      <Workspace />
      <Dock />
      <Dialog />
      <Annotations />
    </div>
  );
}
